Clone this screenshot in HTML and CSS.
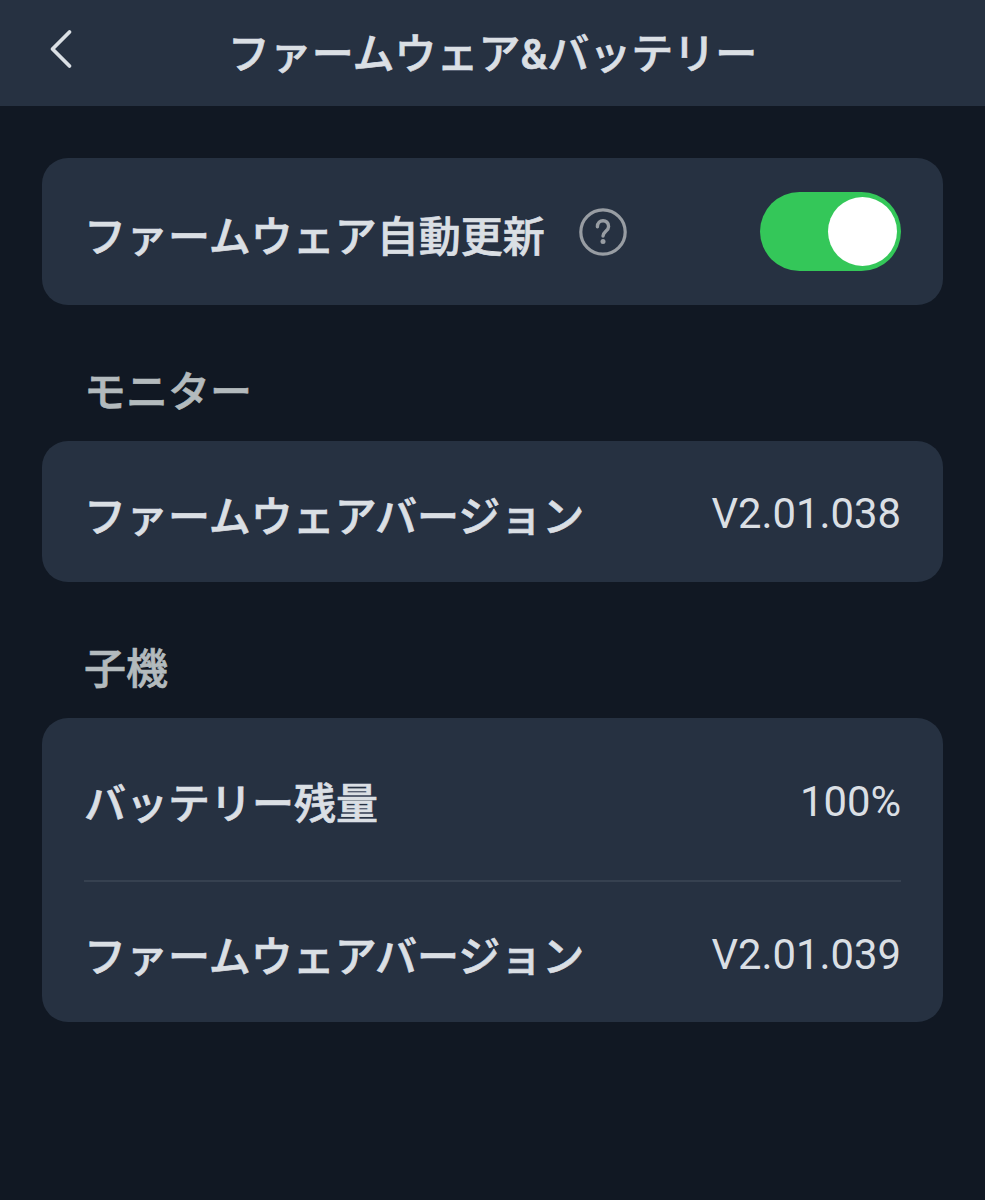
FILE: index.html
```html
<!DOCTYPE html>
<html lang="ja">
<head>
  <meta charset="UTF-8">
  <title>ファームウェア&amp;バッテリー</title>
  <link rel="stylesheet" href="styles.css">
</head>
<body>

  <header class="header">
    <svg class="back" viewBox="0 0 24 40" width="24" height="40">
      <path d="M20.5 3 L3.5 20 L20.5 37" fill="none" stroke="#dadfe4" stroke-width="3.8" stroke-linecap="round" stroke-linejoin="round"/>
    </svg>
    <h1>ファームウェア&amp;バッテリー</h1>
  </header>

  <main class="content">
    <section class="card">
      <div class="row row-update">
        <span class="label">ファームウェア自動更新</span>
        <svg class="help" viewBox="0 0 48 48" width="48" height="48">
          <circle cx="24" cy="24" r="22.2" fill="none" stroke="#989da3" stroke-width="3.2"/>
          <path d="M18.4 18.8 C18.4 10.8 29.6 10.8 29.6 18.4 C29.6 23 24 23.4 24 28" fill="none" stroke="#989da3" stroke-width="3.4" stroke-linecap="round"/>
          <circle cx="24" cy="33.6" r="2.5" fill="#989da3"/>
        </svg>
        <span class="toggle"></span>
      </div>
    </section>

    <h2>モニター</h2>
    <section class="card">
      <div class="row row-monitor">
        <span class="label">ファームウェアバージョン</span>
        <span class="value">V2.01.038</span>
      </div>
    </section>

    <h2>子機</h2>
    <section class="card">
      <div class="row row-battery">
        <span class="label">バッテリー残量</span>
        <span class="value">100%</span>
      </div>
      <div class="row row-camera">
        <span class="label">ファームウェアバージョン</span>
        <span class="value">V2.01.039</span>
      </div>
    </section>
  </main>

</body>
</html>
```

FILE: styles.css
```css
* {
  box-sizing: border-box;
}

body {
  margin: 0;
  height: 1200px;
  font-family: Roboto, 'Noto Sans CJK JP', sans-serif;
  background: #111823;
  color: #dadfe4;
  overflow: hidden;
}

.header {
  display: flex;
  align-items: center;
  height: 106px;
  padding: 0 49px;
  background: #263141;
}

.back {
  flex: none;
  margin-top: -9px;
}

/* a little heavier than medium */
h1, h2, .label {
  font-size: 42px;
  font-weight: 500;
  line-height: 60px;
  -webkit-text-stroke: 0.7px currentColor;
}

h1 {
  flex: 1;
  margin: 0 24px 0 0;
  padding-top: 4px;
  text-align: center;
  white-space: nowrap;
}

.content {
  padding: 52px 42px 0;
}

.card {
  padding: 0 42px;
  border-radius: 26px;
  background: #263141;
}

.row {
  display: flex;
  align-items: center;
  line-height: 60px;
  white-space: nowrap;
}

.row-update {
  height: 147px;
}

.row-monitor {
  height: 141px;
}

.row-battery {
  height: 164px;
  border-bottom: 2px solid #364150;
}

.row-camera {
  height: 140px;
}

.label {
  padding-top: 12px;
}

.value {
  margin-left: auto;
  padding-top: 5px;
  font-size: 41.8px;
}

.help {
  margin-left: 34px;
}

.toggle {
  width: 141px;
  height: 79px;
  margin-left: auto;
  border-radius: 40px;
  background: #34c759;
}

.toggle::after {
  content: "";
  display: block;
  width: 69px;
  height: 69px;
  margin: 5px 4px 0 auto;
  border-radius: 50%;
  background: #fff;
}

h2 {
  height: 136px;
  margin: 0;
  padding: 58px 42px 0;
  color: #b3babd;
}
```
